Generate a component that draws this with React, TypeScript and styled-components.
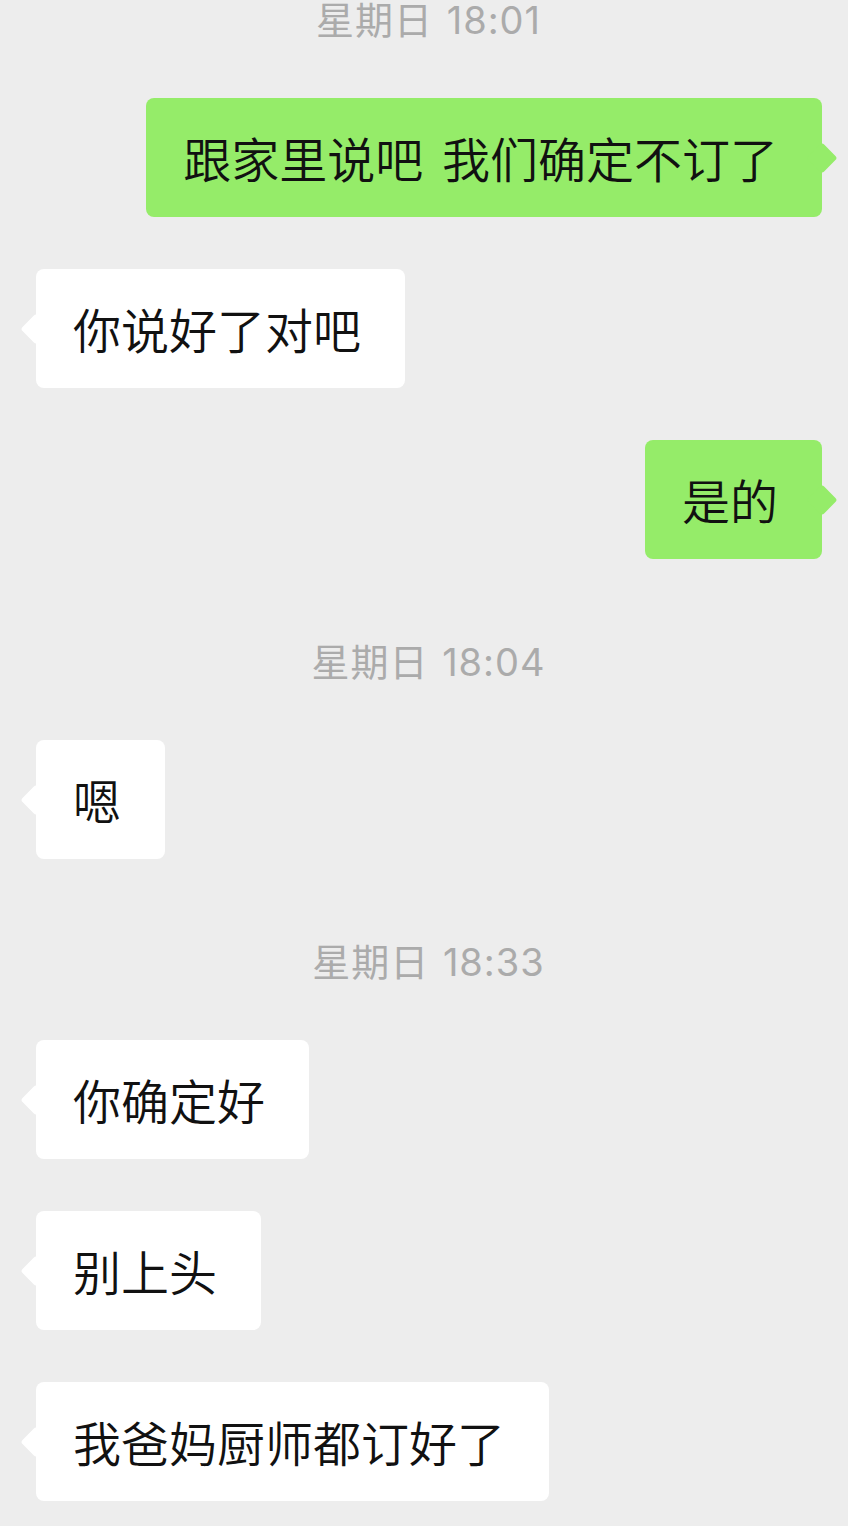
import styled, { createGlobalStyle } from 'styled-components';

type Item =
  | { kind: 'time'; text: string }
  | { kind: 'msg'; mine: boolean; text: string };

const ITEMS: Item[] = [
  { kind: 'time', text: '星期日 18:01' },
  { kind: 'msg', mine: true, text: '跟家里说吧 我们确定不订了' },
  { kind: 'msg', mine: false, text: '你说好了对吧' },
  { kind: 'msg', mine: true, text: '是的' },
  { kind: 'time', text: '星期日 18:04' },
  { kind: 'msg', mine: false, text: '嗯' },
  { kind: 'time', text: '星期日 18:33' },
  { kind: 'msg', mine: false, text: '你确定好' },
  { kind: 'msg', mine: false, text: '别上头' },
  { kind: 'msg', mine: false, text: '我爸妈厨师都订好了' },
];

const GlobalStyle = createGlobalStyle`
  html, body {
    margin: 0;
    padding: 0;
    background: #ededed;
  }
  body {
    font-family: 'Noto Sans CJK SC', 'Noto Sans', sans-serif;
    overflow: hidden;
  }
`;

const Screen = styled.div`
  width: 848px;
  height: 1526px;
  overflow: hidden;
  background: #ededed;
`;

const ChatList = styled.div`
  display: flex;
  flex-direction: column;
  gap: 52px;
  margin-top: -31px;
`;

const TimeStamp = styled.div`
  margin-top: 25px;
  padding-left: 9px;
  height: 52px;
  line-height: 52px;
  text-align: center;
  font-family: Inter, 'Noto Sans CJK SC', sans-serif;
  font-size: 38px;
  letter-spacing: 1px;
  color: #ababab;
  word-spacing: 2px;
`;

const Row = styled.div<{ $mine: boolean }>`
  display: flex;
  justify-content: ${(p) => (p.$mine ? 'flex-end' : 'flex-start')};
  padding: 0 26px 0 36px;
`;

const Bubble = styled.div<{ $mine: boolean }>`
  position: relative;
  background: ${(p) => (p.$mine ? '#95ec69' : '#ffffff')};
  color: #111111;
  border-radius: 8px;
  padding: 26px 44px 26px 37px;
  font-size: 48px;
  font-weight: 350;
  line-height: 67px;
  word-spacing: 8px;
  white-space: pre;

  &::after {
    content: '';
    position: absolute;
    top: 50%;
    ${(p) => (p.$mine ? 'right: -16px;' : 'left: -16px;')}
    width: 22px;
    height: 22px;
    margin-top: -11px;
    ${(p) => (p.$mine ? 'margin-right: 5px;' : 'margin-left: 5px;')}
    background: inherit;
    border-radius: 3px;
    transform: rotate(45deg);
  }
`;

export default function App() {
  return (
    <Screen>
      <GlobalStyle />
      <ChatList>
        {ITEMS.map((item, i) =>
          item.kind === 'time' ? (
            <TimeStamp key={i}>{item.text}</TimeStamp>
          ) : (
            <Row key={i} $mine={item.mine}>
              <Bubble $mine={item.mine}>{item.text}</Bubble>
            </Row>
          )
        )}
      </ChatList>
    </Screen>
  );
}
